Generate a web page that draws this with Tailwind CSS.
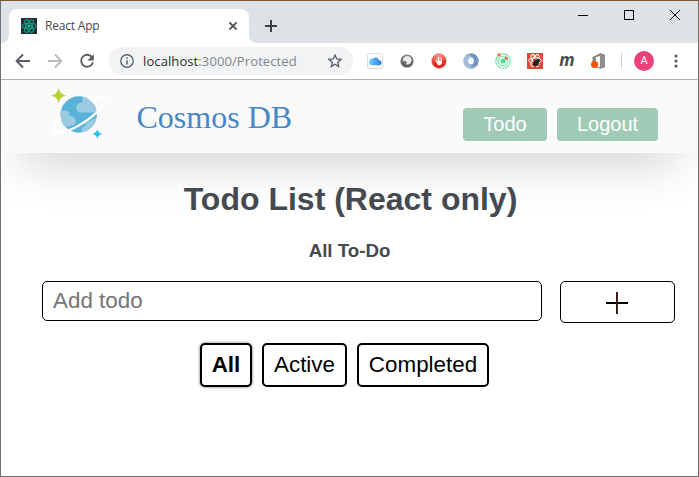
<!DOCTYPE html>
<html lang="en">
<head>
<meta charset="utf-8">
<title>React App</title>
<script src="https://cdn.jsdelivr.net/npm/@tailwindcss/browser@4"></script>
</head>
<body class="w-[699px] h-[477px] overflow-hidden bg-white">
<div class="w-[699px] h-[477px] flex flex-col border border-[#6f6f70] border-t-[#7a5228] bg-white overflow-hidden">

  <!-- Tab strip -->
  <div class="h-[42px] shrink-0 bg-[#dee1e6] flex items-stretch font-['Open_Sans',sans-serif]">
    <div class="w-2 flex items-end"><svg class="w-2 h-2" viewBox="0 0 8 8"><path d="M8 0v8H0a8 8 0 0 0 8-8z" fill="#fff"/></svg></div>
    <div class="mt-2 w-[240px] bg-white rounded-t-lg flex items-center px-3">
      <svg class="size-4" viewBox="0 0 16 16"><rect width="16" height="16" fill="#282b34"/><g fill="none" stroke="#12a083" stroke-width="1.1"><ellipse cx="8" cy="8" rx="7" ry="2.8"/><ellipse cx="8" cy="8" rx="7" ry="2.8" transform="rotate(60 8 8)"/><ellipse cx="8" cy="8" rx="7" ry="2.8" transform="rotate(120 8 8)"/></g><circle cx="8" cy="8" r="1.6" fill="#17c8a3"/></svg>
      <span class="ml-2 text-[12px] leading-4 tracking-[-0.2px] text-[#45494d]">React App</span>
      <svg class="ml-auto size-2" viewBox="0 0 8 8"><path d="M.4.4l7.2 7.2M7.6.4L.4 7.6" stroke="#45494d" stroke-width="1.7"/></svg>
    </div>
    <div class="w-2 flex items-end"><svg class="w-2 h-2" viewBox="0 0 8 8"><path d="M0 0v8h8a8 8 0 0 1-8-8z" fill="#fff"/></svg></div>
    <div class="pl-2 pt-[19px]"><svg class="size-3" viewBox="0 0 12 12"><path d="M6 0v12M0 6h12" stroke="#3c4043" stroke-width="2"/></svg></div>
    <div class="ml-auto flex h-7">
      <div class="w-[46px] flex items-center justify-center"><svg width="10" height="10" viewBox="0 0 10 10"><path d="M0 5.5h10" stroke="#000"/></svg></div>
      <div class="w-[46px] flex items-center justify-center"><svg width="10" height="10" viewBox="0 0 10 10"><path d="M.5.5h9v9h-9z" fill="none" stroke="#000"/></svg></div>
      <div class="w-[46px] flex items-center justify-center"><svg width="10" height="10" viewBox="0 0 10 10"><path d="M0 0l10 10M10 0L0 10" stroke="#000"/></svg></div>
    </div>
  </div>

  <!-- Toolbar -->
  <div class="h-[37px] shrink-0 bg-white border-b border-[#b1b1b3] flex items-center pl-[14px]">
    <svg class="size-4" viewBox="0 0 16 16"><path d="M15 8H2M8 1.5L1.6 8 8 14.5" fill="none" stroke="#5a5d61" stroke-width="1.9"/></svg>
    <svg class="ml-4 size-4" viewBox="0 0 16 16"><path d="M1 8h13M8 1.5L14.4 8 8 14.5" fill="none" stroke="#babcbe" stroke-width="1.9"/></svg>
    <svg class="ml-4 size-4" viewBox="0 0 16 16"><path d="M12.9 4.1A6 6 0 1 0 14 9.2" fill="none" stroke="#5a5d61" stroke-width="1.9"/><path d="M14.8 1v6.4H8.4z" fill="#5a5d61"/></svg>
    <div class="ml-[14px] w-[244px] h-7 rounded-full bg-[#f1f3f4] flex items-center pl-[11px] pr-[11px]">
      <svg class="size-[14px]" viewBox="0 0 14 14"><circle cx="7" cy="7" r="6.2" fill="none" stroke="#5f6368" stroke-width="1.4"/><path d="M7 6.2v4.3M7 3.4v1.5" stroke="#5f6368" stroke-width="1.6"/></svg>
      <span class="ml-[9px] font-['Open_Sans',sans-serif] text-[13px] leading-4 tracking-[0.1px] text-[#2b2e32] whitespace-nowrap">localhost<span class="text-[#80868b]">:3000/Protected</span></span>
      <svg class="ml-auto size-[14px]" viewBox="0 0 14 14"><path d="M7 1l1.7 4 4.3.4-3.3 2.8 1 4.3L7 10.2l-3.7 2.3 1-4.3L1 5.400l4.300-.4z" fill="none" stroke="#5a5d61" stroke-width="1.3"/></svg>
    </div>
    <div class="ml-[14px] flex gap-4">
      <svg class="size-4" viewBox="0 0 16 16"><defs><linearGradient id="cl" x1="0" x2="1"><stop stop-color="#74cdf9"/><stop offset="1" stop-color="#257ee8"/></linearGradient></defs><rect x=".5" y=".5" width="15" height="15" rx="2" fill="#fff" stroke="#d9d9dc"/><path d="M4 12.200A2.600 2.600 0 0 1 3 7.600a2 2 0 0 1 2.500-1.900A3.800 3.800 0 0 1 12 7.300 2.500 2.500 0 0 1 12.800 12.200z" fill="url(#cl)"/></svg>
      <svg class="size-4" viewBox="0 0 16 16"><defs><linearGradient id="gr" x1="0" y1="0" x2="0" y2="1"><stop stop-color="#888"/><stop offset="1" stop-color="#5a5a5a"/></linearGradient></defs><circle cx="8" cy="8" r="6.600" fill="url(#gr)"/><circle cx="8.300" cy="7.300" r="4.200" fill="#e8e9e9"/><circle cx="5.800" cy="9.900" r="1.800" fill="#505352"/><circle cx="5.800" cy="9.900" r=".8" fill="#999"/></svg>
      <svg class="size-4" viewBox="0 0 16 16"><defs><linearGradient id="rd" x1="0" y1="0" x2="0" y2="1"><stop stop-color="#f4a095"/><stop offset=".5" stop-color="#e8392c"/><stop offset="1" stop-color="#e01508"/></linearGradient></defs><circle cx="8" cy="8" r="7.200" fill="url(#rd)" stroke="#dc5046" stroke-width=".7"/><path d="M6 8.500V5M7.500 8V4M9 8V4.300M10.500 8.500V5.500M5.600 9L4.200 7.600" stroke="#fff" stroke-width=".9" stroke-linecap="round"/><path d="M5.500 8h5.400v2.200L9.200 12.200H7.200L5.500 10z" fill="#fff"/></svg>
      <svg class="size-4" viewBox="0 0 16 16"><circle cx="8" cy="8" r="5.300" fill="none" stroke="#8aa9cb" stroke-width="4.800"/><path d="M8 .5A7.500 7.500 0 0 1 13.500 13C10 14 8 13 7.500 11.500A4 4 0 0 0 10.500 6C10 3 6.500 2 8 .5z" fill="#6089b8" opacity=".6"/><path d="M8 15.500A7.500 7.500 0 0 1 2.500 3C6 2 8 3 8.500 4.500A4 4 0 0 0 5.500 10C6 13 9.500 14 8 15.500z" fill="#bacde2" opacity=".6"/><ellipse cx="8" cy="8" rx="2.600" ry="3.600" fill="#f4f8fb"/></svg>
      <svg class="size-4" viewBox="0 0 16 16"><g fill="none" stroke="#68e6a4"><circle cx="8" cy="8" r="7.200" stroke-width="1.100"/><circle cx="8" cy="8" r="4.800" stroke-width="1.100"/></g><circle cx="8" cy="8" r="2.600" fill="#50dd91"/><circle cx="4" cy="1.900" r="1.700" fill="#ff6633"/><circle cx="11.200" cy="5.200" r="1.600" fill="#f75a3a"/></svg>
      <svg class="size-4" viewBox="0 0 16 16"><rect width="16" height="16" fill="#df4936"/><g fill="none" stroke="#fff" stroke-width="1"><ellipse cx="8" cy="7.500" rx="6.500" ry="2.600"/><ellipse cx="8" cy="7.500" rx="6.500" ry="2.600" transform="rotate(60 8 7.500)"/><ellipse cx="8" cy="7.500" rx="6.500" ry="2.600" transform="rotate(120 8 7.500)"/></g><ellipse cx="9" cy="10" rx="2.600" ry="3.400" fill="#29201f" transform="rotate(35 9 10)"/><circle cx="11" cy="7.300" r="1.500" fill="#29201f"/><path d="M4.500 9l8 3.500M6 13l6-6M9.500 5.500l4 4" stroke="#29201f" stroke-width=".8"/></svg>
      <span class="size-4 flex items-center justify-center font-['Open_Sans',sans-serif] italic font-bold text-[17px] leading-4 text-[#484b4a] pb-[2px]">m</span>
      <svg class="size-4" viewBox="0 0 16 16"><path d="M1.500 4L9 .3l5 1.400v12.600l-5 1.400-5-1.900 5 .5V3L4.800 4.200v6.500L1.500 12z" fill="#858585"/><path d="M9 .3l5 1.400v12.600l-5 1.400z" fill="#8d8d8d"/><circle cx="3.600" cy="11.500" r="3.600" fill="#fa5100"/></svg>
    </div>
    <div class="ml-[14px] w-px h-4 bg-[#cfd1d4]"></div>
    <div class="ml-3 size-5 rounded-full bg-[#ec407a] flex items-center justify-center font-[Roboto,sans-serif] text-[11px] text-white">A</div>
    <svg class="ml-[20px] w-1 h-4" viewBox="0 0 4 16"><g fill="#5a5d61"><circle cx="2" cy="3" r="1.600"/><circle cx="2" cy="8" r="1.600"/><circle cx="2" cy="13" r="1.600"/></g></svg>
  </div>

  <!-- Page -->
  <div class="flex-1 overflow-hidden font-['Liberation_Sans',Arial,sans-serif]">
    <header class="h-[73px] bg-[#fafafa] shadow-[0_25px_50px_-20px_rgba(0,0,0,0.25)] flex items-start pl-[49px] pr-10">
      <svg class="mt-[6px] w-[56px] h-[54px]" viewBox="0 0 56 54">
        <defs><clipPath id="globe"><circle cx="28.700" cy="28.500" r="18.200"/></clipPath></defs>
        <circle cx="28.700" cy="28.500" r="18.200" fill="#59b3d8"/>
        <g clip-path="url(#globe)" fill="#9bcae3">
          <path d="M30.500 26.500a5 5 0 0 1-.5-9.800 5.800 5.800 0 0 1 2.500-.2 5.500 5.500 0 0 1 3-7L50 12v14.500z"/>
          <path d="M9 24.500h7a5 5 0 0 1 3.500 5.500h1.500a5 5 0 0 1 1 9.800L10 42z"/>
          <path d="M48 32l-5 1-5 3.500a4 4 0 0 0-3 4 4 4 0 0 0-3.500 4.500l4 4 14-8z"/>
        </g>
        <path d="M40 14.500C47 11 55 10.300 54.300 15.300 53.500 21.500 41 33 28 40 15 47.300 3 48.800 3 43.500 3 39.800 6.500 35.500 11 31.500" fill="none" stroke="#fff" stroke-width="2.300"/>
        <path d="M8.600 2q1.200 6.400 7.600 7.600Q9.800 10.800 8.600 17.200 7.400 10.800 1 9.600 7.400 8.400 8.600 2z" fill="#b6d334"/>
        <path d="M47.300 43.300q.9 3.800 4.700 4.700-3.800.9-4.700 4.700-.9-3.800-4.700-4.700 3.800-.9 4.700-4.700z" fill="#2ebdf0"/>
      </svg>
      <div class="ml-[30.500px] mt-[19px] font-['Liberation_Serif','Times_New_Roman',serif] text-[32px] leading-9 text-[#4687c7] whitespace-nowrap">Cosmos DB</div>
      <nav class="ml-auto mt-7 flex gap-[10px] text-[20px] leading-[33px] text-white">
        <a class="w-[84px] h-[33px] rounded bg-[#9fcab6] text-center">Todo</a>
        <a class="w-[101px] h-[33px] rounded bg-[#9fcab6] text-center">Logout</a>
      </nav>
    </header>
    <main class="relative text-center">
      <h1 class="pt-[28px] pl-[2px] text-[32px] leading-[37px] font-bold text-[#444a4f]">Todo List (React only)</h1>
      <h3 class="mt-[22px] text-[18.720px] leading-[21px] font-bold text-[#444a4f]">All To-Do</h3>
      <form class="mt-5 ml-[41px] flex items-start gap-[18px]">
        <input class="w-[500px] h-10 rounded-[5px] border border-black bg-white px-[10px] text-[22.400px] placeholder:text-[#757575]" placeholder="Add todo">
        <button type="button" class="w-[115px] h-[42px] rounded-[5px] border border-black bg-white flex items-center justify-center" aria-label="Add"><svg class="relative -left-px top-px" width="22" height="22" viewBox="0 0 22 22"><path d="M0 11h22" stroke="#000" stroke-width="2"/><path d="M10.500 0v22" stroke="#5c1808" stroke-width="1"/><path d="M11.300 0v22" stroke="#000" stroke-width="1"/></svg></button>
      </form>
      <div class="mt-5 ml-[199px] flex gap-[10px] text-[22.400px] leading-[38px] text-black">
        <button class="w-[52px] h-11 rounded-[5px] border-2 border-black bg-white font-bold shadow-[0_0_2px_1px_rgba(0,0,0,0.3)]">All</button>
        <button class="w-[85px] h-11 rounded-[5px] border-2 border-black bg-white">Active</button>
        <button class="w-[132px] h-11 rounded-[5px] border-2 border-black bg-white">Completed</button>
      </div>
    </main>
  </div>
</div>
</body>
</html>
